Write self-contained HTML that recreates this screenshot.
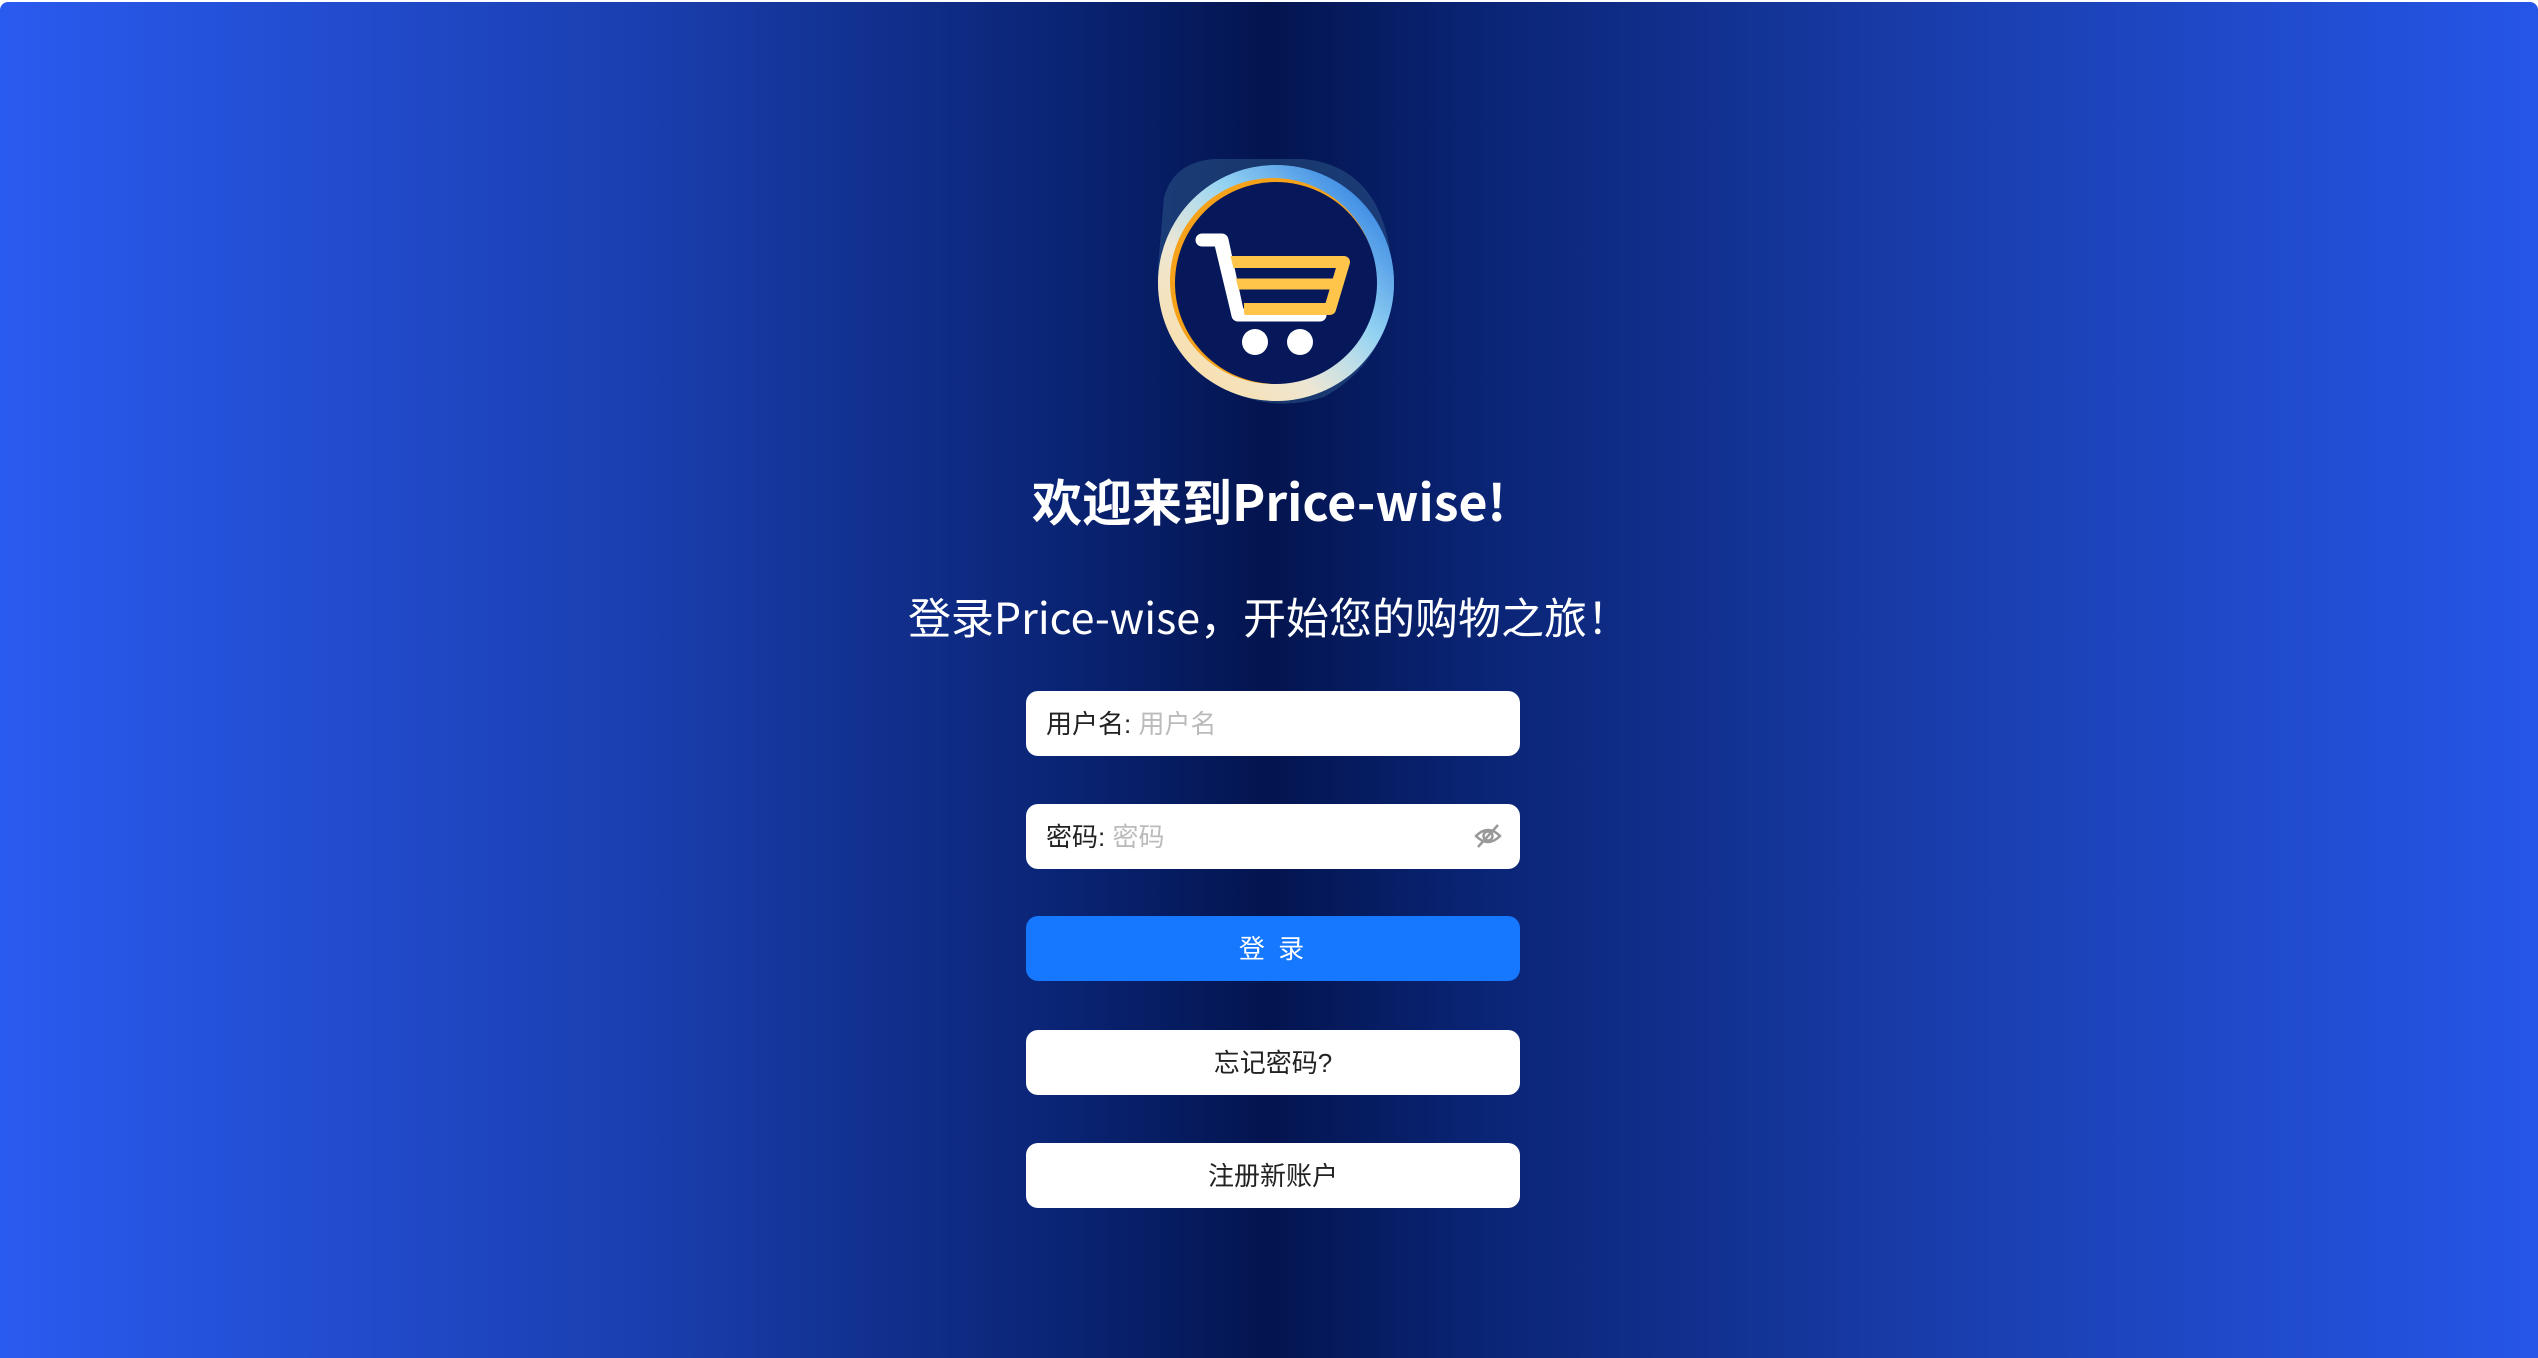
<!DOCTYPE html>
<html><head><meta charset="utf-8"><style>
html,body{margin:0;padding:0;width:2538px;height:1358px;overflow:hidden;background:#fff;}
.bg{position:absolute;left:0;top:2px;width:2538px;height:1356px;border-radius:8px 8px 0 0;
background:linear-gradient(90deg,#2a5bf0 0%,#1a3fb0 25%,#0a2474 42%,#03144f 50%,#0a2474 58%,#1a3fb0 78%,#2656e8 100%);
font-family:"Liberation Sans","Noto Sans CJK SC",sans-serif;}
.logo{position:absolute;left:1154px;top:155px;width:242px;height:248px;}
h1{position:absolute;left:0;width:2538px;top:463px;margin:0;text-align:center;color:#fff;font-size:50px;font-weight:bold;line-height:70px;font-family:"Noto Sans CJK SC",sans-serif;}
.sub{position:absolute;left:0;width:2538px;top:584px;text-align:center;color:#fff;font-size:43px;line-height:60px;font-family:"Noto Sans CJK SC",sans-serif;}
.f{position:absolute;left:1026px;width:494px;height:65px;border-radius:12px;background:#fff;box-sizing:border-box;font-size:26px;line-height:67px;}
.in{padding-left:20px;color:#222;}
.in span{color:#bbb;}
.btn{text-align:center;color:#222;}
.login{background:#1677ff;color:#fff;letter-spacing:3px;}
</style></head><body><div class="bg">
<svg class="logo" viewBox="0 0 242 248">
<defs>
<linearGradient id="r" x1="0" y1="1" x2="1" y2="0"><stop offset="0" stop-color="#ffe2a8"/><stop offset="0.35" stop-color="#fff6e0"/><stop offset="0.6" stop-color="#8fe0ff"/><stop offset="1" stop-color="#0b5fdc"/></linearGradient>
<linearGradient id="r2" x1="0" y1="1" x2="1" y2="0"><stop offset="0" stop-color="#ffcf7a"/><stop offset="0.5" stop-color="#b9c8d8"/><stop offset="1" stop-color="#2a7fe0"/></linearGradient>
</defs>
<path d="M10 40 Q20 5 60 2 L150 2 Q230 10 238 110 Q242 200 170 240 Q110 260 50 220 Q0 180 4 110Z" fill="#2e5a8a" opacity="0.5"/>
<circle cx="122" cy="126" r="118" fill="url(#r)"/>
<circle cx="122" cy="126" r="118" fill="url(#r2)" opacity="0.35"/>
<circle cx="119" cy="124" r="103" fill="#f5a21a"/>
<circle cx="122" cy="126" r="101" fill="#06185a"/>
<path d="M48 83 L68 83 L84 158 L166 158" stroke="#fff" stroke-width="13" fill="none" stroke-linecap="round" stroke-linejoin="round"/>
<path d="M76 105 L190 105 L176 152 L90 152" stroke="#ffc54a" stroke-width="12" fill="none" stroke-linejoin="round"/>
<path d="M82 127 L180 127" stroke="#ffc54a" stroke-width="11"/>
<path d="M66 83 L84 158" stroke="#fff" stroke-width="13" stroke-linecap="round"/>
<circle cx="101" cy="185" r="13" fill="#fff"/><circle cx="146" cy="185" r="13" fill="#fff"/>
</svg>
<h1>欢迎来到Price-wise!</h1>
<div class="sub">登录Price-wise，开始您的购物之旅！</div>
<div class="f in" style="top:689px">用户名: <span>用户名</span></div>
<div class="f in" style="top:802px">密码: <span>密码</span>
<svg style="position:absolute;right:18px;top:19px" width="28" height="26" viewBox="0 0 28 26"><path d="M2 13 Q14 1 26 13 Q14 25 2 13Z" fill="none" stroke="#999" stroke-width="2.5"/><circle cx="14" cy="13" r="4.5" fill="none" stroke="#999" stroke-width="2.5"/><path d="M4 24 L24 2" stroke="#999" stroke-width="2.5"/></svg></div>
<div class="f btn login" style="top:914px">登 录</div>
<div class="f btn" style="top:1028px">忘记密码?</div>
<div class="f btn" style="top:1141px">注册新账户</div>
</div></body></html>
